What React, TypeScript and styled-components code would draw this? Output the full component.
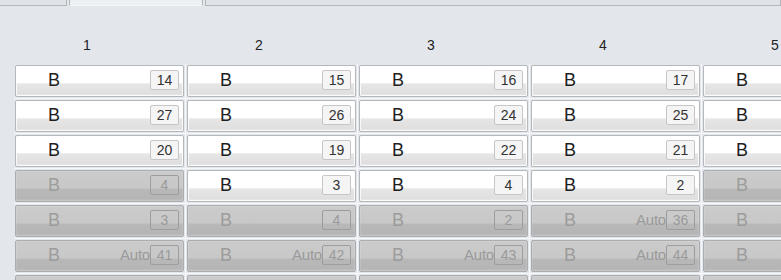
import React from 'react'
import styled, { createGlobalStyle } from 'styled-components'

const GlobalStyle = createGlobalStyle`
  html, body {
    margin: 0;
    padding: 0;
    background: #e3e7ec;
    overflow: hidden;
  }
  body {
    font-family: "Liberation Sans", Arial, sans-serif;
  }
`

const Page = styled.div`
  width: 781px;
  height: 280px;
  overflow: hidden;
  background: #e3e7ec;
`

const TabStrip = styled.div`
  display: flex;
  gap: 2px;
  height: 6px;
`

const Tab = styled.div<{ $active?: boolean; $width?: number }>`
  box-sizing: border-box;
  height: 6px;
  ${(p) => (p.$width ? `width: ${p.$width}px;` : 'flex: 1;')}
  background: ${(p) => (p.$active ? '#edf0f3' : '#dfe3e7')};
  border-left: 1px solid #b3b7bc;
  border-right: 1px solid #b3b7bc;
  border-bottom: ${(p) => (p.$active ? '1px solid #f3f5f7' : '1px solid #b3b7bc')};
  &:first-child {
    border-left: none;
  }
`

const HeaderRow = styled.div`
  display: grid;
  grid-template-columns: repeat(5, 171px);
  column-gap: 1px;
  padding-left: 14px;
  height: 58px;
  box-sizing: border-box;
  padding-top: 31px;
`

const HeaderCell = styled.div`
  text-align: center;
  padding-right: 25px;
  font-size: 14px;
  line-height: 16px;
  color: #222;
`

const GridWrap = styled.div`
  padding-left: 14px;
`

const Grid = styled.div`
  display: grid;
  grid-template-columns: repeat(5, 171px);
  grid-auto-rows: 34px;
  gap: 1px;
  background: #f6f8fa;
  width: max-content;
`

const Slot = styled.div`
  background: #e3e7ec;
  padding: 1px;
`

const Cell = styled.div<{ $off?: boolean }>`
  box-sizing: border-box;
  height: 32px;
  display: flex;
  align-items: center;
  border: 1px solid ${(p) => (p.$off ? '#a9acb0' : '#b4b8bd')};
  border-radius: 2px;
  padding: 0 4px 2px 32px;
  background: ${(p) =>
    p.$off
      ? 'linear-gradient(#cbcbcb 0%, #c8c8c8 55%, #b8b8b8 62%, #b5b5b5 92%, #c2c2c2 100%)'
      : 'linear-gradient(#ffffff 0%, #ffffff 55%, #e6e6e6 60%, #dfdfdf 92%, #eeeeee 100%)'};
  box-shadow: inset 0 0 0 1px ${(p) => (p.$off ? 'rgba(255,255,255,0.12)' : 'rgba(255,255,255,0.8)')};
`

const Letter = styled.span<{ $off?: boolean }>`
  font-size: 18px;
  line-height: 20px;
  color: ${(p) => (p.$off ? '#9c9c9c' : '#1e1e1e')};
  flex: 1;
`

const AutoLabel = styled.span`
  font-size: 15px;
  line-height: 20px;
  color: #9a9a9a;
  letter-spacing: -0.2px;
`

const Badge = styled.span<{ $off?: boolean }>`
  box-sizing: border-box;
  width: 29px;
  height: 20px;
  display: flex;
  align-items: center;
  justify-content: center;
  font-size: 14px;
  border-radius: 2px;
  border: 1px solid ${(p) => (p.$off ? '#9d9d9d' : '#c6c6c6')};
  background: ${(p) => (p.$off ? 'transparent' : '#f5f5f5')};
  color: ${(p) => (p.$off ? '#9a9a9a' : '#333')};
`

type CellData = { n?: number; off?: boolean; auto?: boolean }

const rows: CellData[][] = [
  [{ n: 14 }, { n: 15 }, { n: 16 }, { n: 17 }, { n: 18 }],
  [{ n: 27 }, { n: 26 }, { n: 24 }, { n: 25 }, { n: 23 }],
  [{ n: 20 }, { n: 19 }, { n: 22 }, { n: 21 }, { n: 18 }],
  [{ n: 4, off: true }, { n: 3 }, { n: 4 }, { n: 2 }, { n: 1, off: true }],
  [
    { n: 3, off: true },
    { n: 4, off: true },
    { n: 2, off: true },
    { n: 36, off: true, auto: true },
    { n: 1, off: true },
  ],
  [
    { n: 41, off: true, auto: true },
    { n: 42, off: true, auto: true },
    { n: 43, off: true, auto: true },
    { n: 44, off: true, auto: true },
    { n: 45, off: true, auto: true },
  ],
  [
    { n: 5, off: true },
    { n: 6, off: true },
    { n: 5, off: true },
    { n: 6, off: true },
    { n: 5, off: true },
  ],
]

export default function App() {
  return (
    <>
      <GlobalStyle />
      <Page>
        <TabStrip>
          <Tab $width={67} />
          <Tab $width={134} $active />
          <Tab />
        </TabStrip>
        <HeaderRow>
          {[1, 2, 3, 4, 5].map((h) => (
            <HeaderCell key={h}>{h}</HeaderCell>
          ))}
        </HeaderRow>
        <GridWrap>
          <Grid>
            {rows.map((row, r) =>
              row.map((c, i) => (
                <Slot key={`${r}-${i}`}>
                  <Cell $off={c.off}>
                    <Letter $off={c.off}>B</Letter>
                    {c.auto && <AutoLabel>Auto</AutoLabel>}
                    <Badge $off={c.off}>{c.n}</Badge>
                  </Cell>
                </Slot>
              ))
            )}
          </Grid>
        </GridWrap>
      </Page>
    </>
  )
}
